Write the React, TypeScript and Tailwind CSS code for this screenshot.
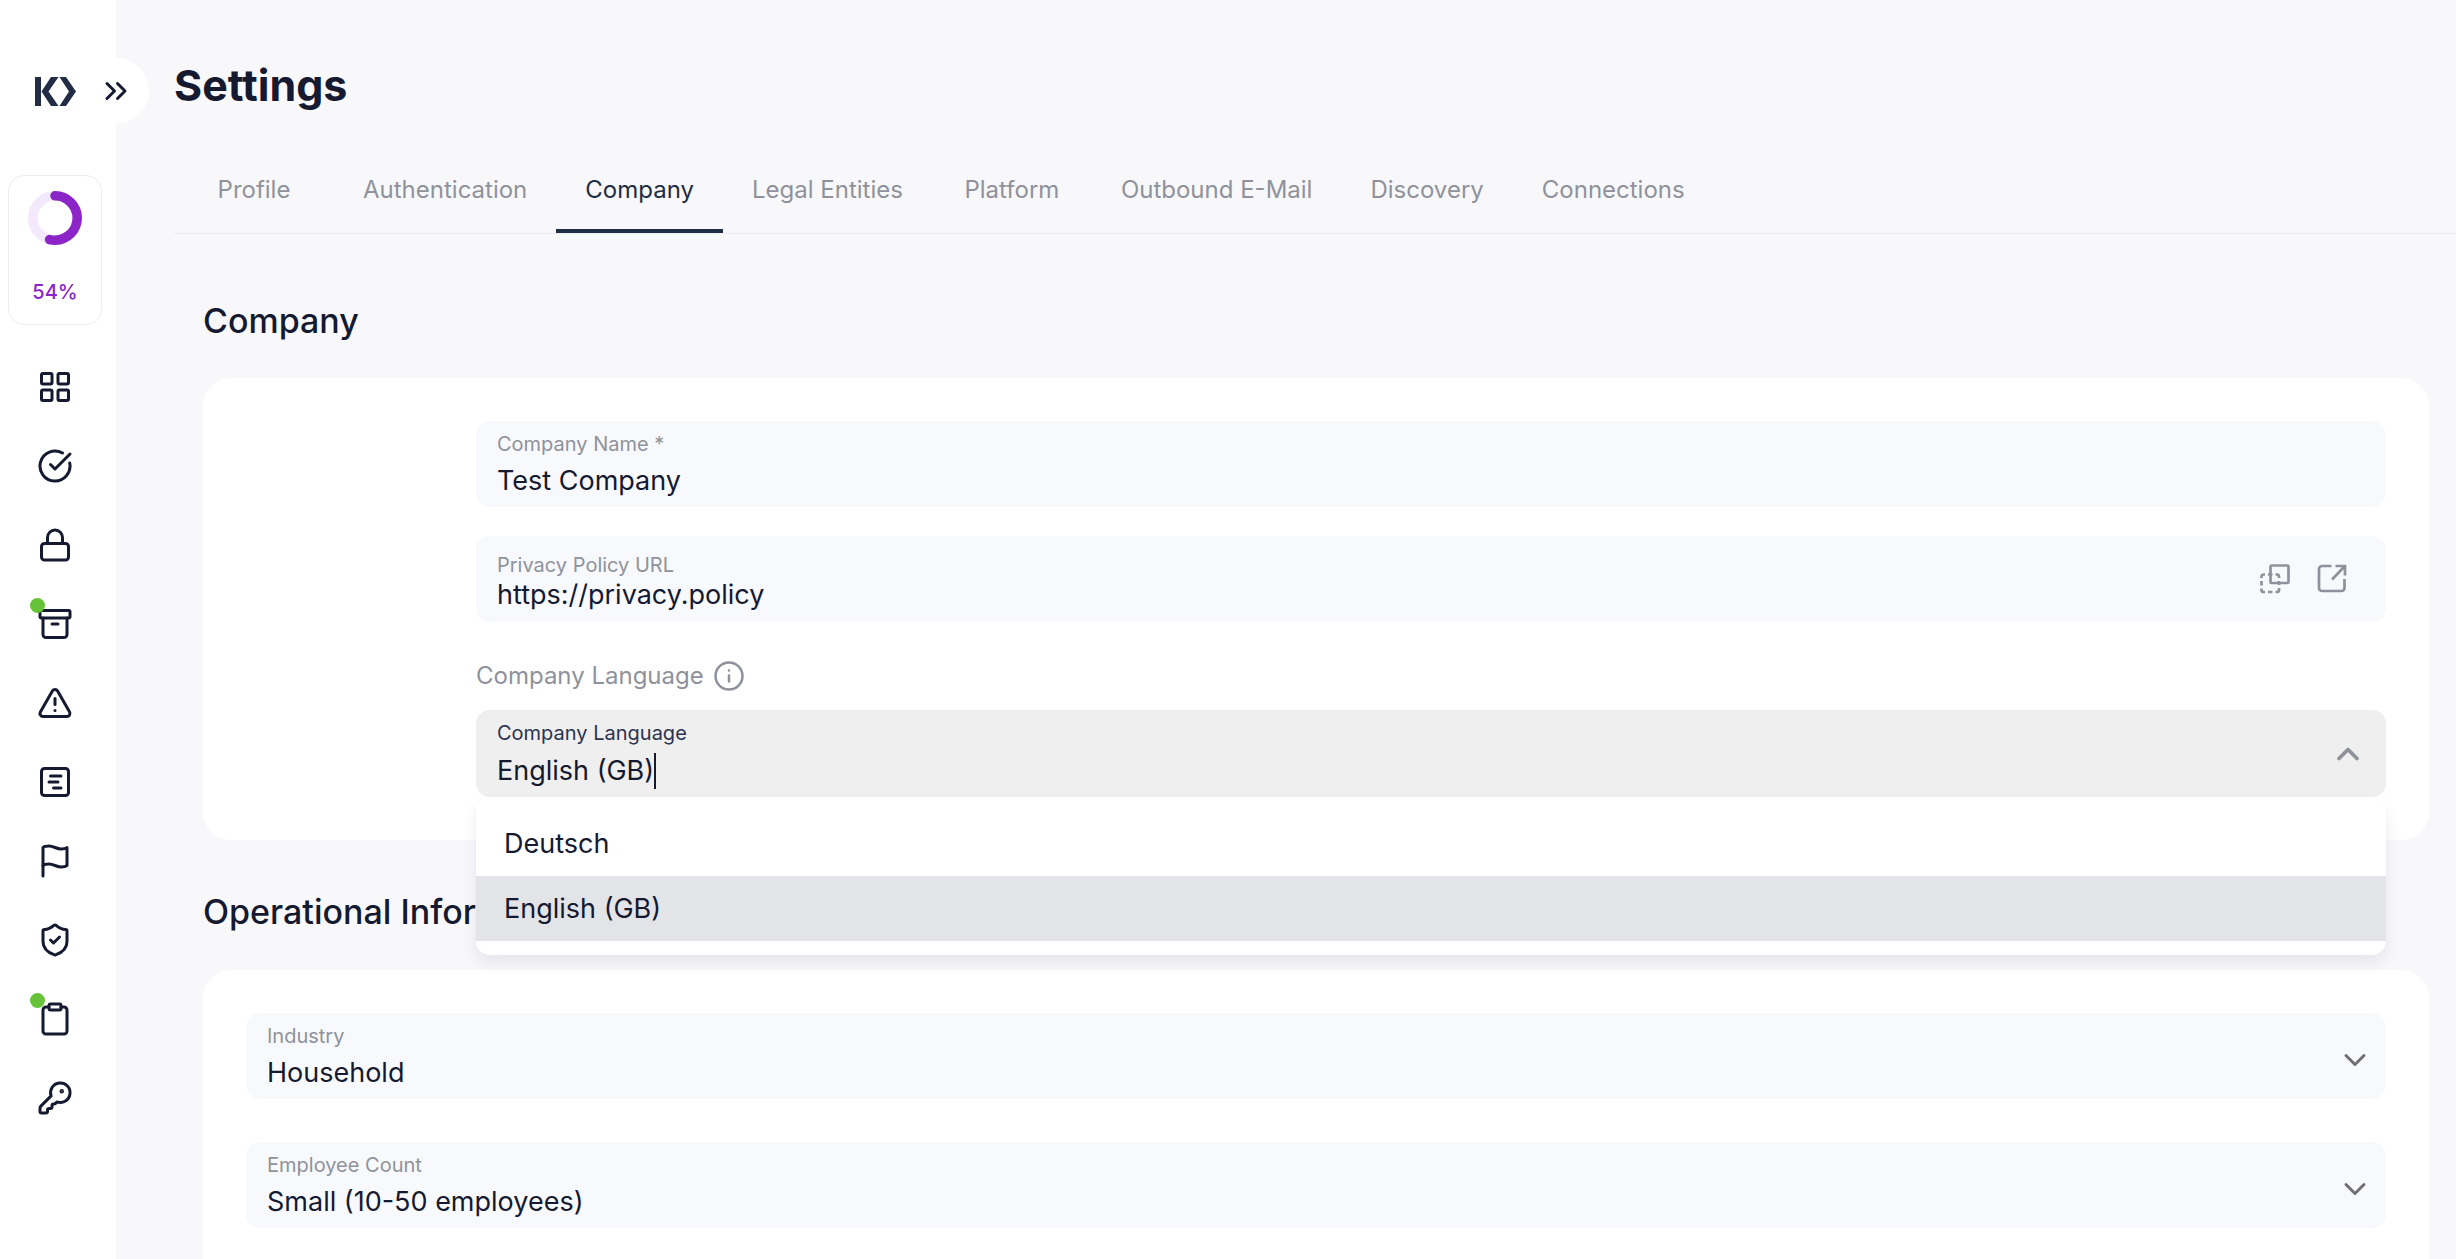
import React, { useState } from 'react';
import {
    Archive,
    ChevronDown,
    ChevronsRight,
    ChevronUp,
    CircleCheckBig,
    Clipboard,
    KeyRound,
    LayoutGrid,
    Lock,
    ShieldCheck,
    SquareChartGantt,
    TriangleAlert,
} from 'lucide-react';

const FlagIcon: React.FC<{ size?: number }> = ({ size = 24 }) => (
    <svg width={size} height={size} viewBox="0 0 24 24" fill="none" stroke="currentColor" strokeWidth="2" strokeLinecap="round" strokeLinejoin="round">
        <path d="M4 15s1-1 4-1 5 2 8 2 4-1 4-1V3s-1 1-4 1-5-2-8-2-4 1-4 1z" />
        <path d="M4 22v-7" />
    </svg>
);

const Logo = () => (
    <svg width="41" height="29" viewBox="0 0 41 29" fill="#232c45">
        <path d="M0 0h6v29H0z" />
        <path d="M16 0h7.500L13.500 14.500L23.500 29H16L6.500 14.500z" />
        <path d="M24.500 0H31L41 14.500L31 29h-6.500L34 14.500z" />
    </svg>
);

const CopyIcon = () => (
    <svg width="30" height="30" viewBox="0 0 30 30" fill="none" stroke="currentColor" strokeWidth="2.700">
        <rect x="10.500" y="1.500" width="18" height="17.500" rx="1" />
        <path d="M1.500 14v-1.500a2 2 0 0 1 2-2H5M8 10.500h4.500M15.500 10.500h1.500a2 2 0 0 1 2 2V14M19 17v4M19 24v2a2 2 0 0 1-2 2h-1.500M12.500 28H8M5 28H3.500a2 2 0 0 1-2-2v-1.500M1.500 21.500V17" />
    </svg>
);

const OpenIcon = () => (
    <svg width="30" height="30" viewBox="0 0 30 30" fill="none" stroke="currentColor" strokeWidth="2.700">
        <path d="M14.500 2H5a3 3 0 0 0-3 3v19a3 3 0 0 0 3 3h19.500a3 3 0 0 0 3-3V15" />
        <path d="M18.500 2H28v9.500M28 2L15 15.500" />
    </svg>
);

const InfoIcon = () => (
    <svg width="30" height="30" viewBox="0 0 30 30" fill="none" stroke="currentColor" strokeWidth="2.500" strokeLinecap="round">
        <circle cx="15" cy="15" r="13.500" />
        <path d="M15 14.500v6M15 9.500v.1" />
    </svg>
);

const ProgressRing: React.FC<{ value: number }> = ({ value }) => (
    <svg width="54" height="54" viewBox="0 0 54 54" fill="none" strokeWidth="9.500">
        <circle cx="27" cy="27" r="22.200" stroke="#f4e8fd" />
        <circle
            cx="27"
            cy="27"
            r="22.200"
            stroke="#8b25c8"
            strokeLinecap="round"
            pathLength={100}
            strokeDasharray={`${value} 100`}
            transform="rotate(-90 27 27)"
        />
    </svg>
);

const navItems = [
    { name: 'Dashboard', icon: LayoutGrid, dot: false },
    { name: 'Tasks', icon: CircleCheckBig, dot: false },
    { name: 'Privacy', icon: Lock, dot: false },
    { name: 'Archive', icon: Archive, dot: true },
    { name: 'Risks', icon: TriangleAlert, dot: false },
    { name: 'Planning', icon: SquareChartGantt, dot: false },
    { name: 'Incidents', icon: FlagIcon, dot: false },
    { name: 'Security', icon: ShieldCheck, dot: false },
    { name: 'Audits', icon: Clipboard, dot: true },
    { name: 'Access', icon: KeyRound, dot: false },
];

const tabs = ['Profile', 'Authentication', 'Company', 'Legal Entities', 'Platform', 'Outbound E-Mail', 'Discovery', 'Connections'];

const Sidebar = () => (
    <aside className="relative flex w-[116px] shrink-0 flex-col items-center bg-white pr-[6px]">
        <a href="#home" aria-label="Home" className="mt-[77px]">
            <Logo />
        </a>
        <button aria-label="Expand menu" className="absolute top-[58px] -right-[33px] z-10 flex size-[66px] items-center justify-center rounded-full bg-white">
            <ChevronsRight size={36} />
        </button>
        <div className="mt-[69px] flex h-[150px] w-[94px] flex-col items-center rounded-2xl border border-[#ececf2] pt-[15px]">
            <ProgressRing value={54} />
            <span className="mt-[35px] text-xl leading-[24px] font-medium text-[#8b25c8]">54%</span>
        </div>
        <nav className="mt-[22px] flex flex-col">
            {navItems.map(({ name, icon: Icon, dot }) => (
                <a key={name} href={`#${name.toLowerCase()}`} aria-label={name} className="relative flex h-[79px] w-[72px] items-center justify-center">
                    <Icon size={36} />
                    {dot && <span className="absolute top-[14px] left-[11px] size-[15px] rounded-full bg-[#67c23a]" />}
                </a>
            ))}
        </nav>
    </aside>
);

type SelectFieldProps = { id: string; label: string; options: string[] };

const SelectField: React.FC<SelectFieldProps> = ({ id, label, options }) => (
    <div className="relative flex h-[86px] flex-col rounded-[14px] bg-[#f8f9fd] pt-[11px]">
        <label htmlFor={id} className="px-[21px] text-xl leading-[24px] text-[#8f929b]">{label}</label>
        <select id={id} className="mt-[7px] h-[36px] w-full appearance-none bg-transparent px-[21px] text-[27px] leading-[36px] outline-none">
            {options.map(o => <option key={o}>{o}</option>)}
        </select>
        <ChevronDown size={36} className="pointer-events-none absolute top-[29px] right-[13px] text-[#707070]" />
    </div>
);

const LanguageSelect = () => {
    const languages = ['Deutsch', 'English (GB)'];
    const [selected, setSelected] = useState('English (GB)');

    return (
        <div className="relative">
            <div className="flex h-[87px] items-center justify-between rounded-[14px] bg-[#efefef] pr-[20px] pl-[21px]">
                <div className="flex flex-col pt-[2px]">
                    <label htmlFor="language" className="text-xl leading-[24px] text-[#2b3350]">Company Language</label>
                    <div className="mt-[8px] flex items-center">
                        <input
                            id="language"
                            role="combobox"
                            aria-expanded="true"
                            aria-controls="language-list"
                            readOnly
                            value={selected}
                            className="field-sizing-content h-[36px] bg-transparent text-[27px] leading-[36px] outline-none"
                        />
                        <span className="h-[36px] w-[2px] bg-[#151a30]" />
                    </div>
                </div>
                <ChevronUp size={36} strokeWidth={2.5} className="text-[#8f929b]" />
            </div>
            <ul id="language-list" role="listbox" className="absolute inset-x-0 top-full z-20 rounded-[14px] bg-white py-[14px] shadow-[0_8px_16px_rgba(20,25,50,0.08)]">
                {languages.map(l => (
                    <li
                        key={l}
                        role="option"
                        aria-selected={l === selected}
                        onClick={() => setSelected(l)}
                        className="flex h-[65px] cursor-pointer items-center px-[28px] text-[27px] leading-[36px] aria-selected:bg-[#e3e4e8]"
                    >
                        {l}
                    </li>
                ))}
            </ul>
        </div>
    );
};

const App: React.FC = () => {
    const [activeTab, setActiveTab] = useState('Company');

    return (
        <div className="flex h-screen overflow-hidden bg-[#f8f8fb] font-['Inter',sans-serif] text-[#151a30]">
            <Sidebar />
            <main className="min-w-0 flex-1 pt-[61px] pl-[58px]">
                <h1 className="text-[43px] leading-[48px] font-bold">Settings</h1>

                <div role="tablist" className="mt-[41px] flex border-b border-[#ececf0]">
                    {tabs.map(tab => (
                        <button
                            key={tab}
                            role="tab"
                            aria-selected={tab === activeTab}
                            onClick={() => setActiveTab(tab)}
                            className="h-[83px] min-w-[160px] border-b-4 border-transparent px-[29px] text-2xl text-[#8f929b] aria-selected:border-[#232c45] aria-selected:text-[#232c45]"
                        >
                            {tab}
                        </button>
                    ))}
                </div>

                <div className="pr-[27px] pl-[29px]">
                    <h2 className="mt-[65px] text-[34px] leading-[44px] font-medium">Company</h2>
                    <section className="mt-[35px] rounded-[28px] bg-white p-[43px] pl-[273px]">
                        <div className="flex h-[86px] flex-col rounded-[14px] bg-[#f8f9fd] px-[21px] pt-[11px]">
                            <label htmlFor="name" className="text-xl leading-[24px] text-[#8f929b]">Company Name *</label>
                            <input id="name" defaultValue="Test Company" className="mt-[7px] h-[36px] bg-transparent text-[27px] leading-[36px] outline-none" />
                        </div>

                        <div className="mt-[29px] flex h-[86px] items-center rounded-[14px] bg-[#f8f9fd] pr-[39px] pl-[21px]">
                            <div className="flex flex-1 flex-col pt-[8px]">
                                <label htmlFor="url" className="text-xl leading-[24px] text-[#8f929b]">Privacy Policy URL</label>
                                <input id="url" defaultValue="https://privacy.policy" className="h-[36px] bg-transparent text-[27px] leading-[36px] outline-none" />
                            </div>
                            <div className="flex gap-[27px] text-[#8f929b]">
                                <button aria-label="Copy URL"><CopyIcon /></button>
                                <button aria-label="Open URL"><OpenIcon /></button>
                            </div>
                        </div>

                        <div className="mt-[39px] mb-[19px] flex h-[30px] items-center gap-[10px] text-2xl text-[#8f929b]">
                            Company Language
                            <button aria-label="About company language"><InfoIcon /></button>
                        </div>
                        <LanguageSelect />
                    </section>

                    <h2 className="mt-[50px] text-[34px] leading-[44px] font-medium">Operational Information</h2>
                    <section className="mt-[36px] flex flex-col gap-[43px] rounded-[28px] bg-white p-[43px] pb-20">
                        <SelectField id="industry" label="Industry" options={['Household']} />
                        <SelectField id="employees" label="Employee Count" options={['Small (10-50 employees)']} />
                    </section>
                </div>
            </main>
        </div>
    );
};

export default App;
